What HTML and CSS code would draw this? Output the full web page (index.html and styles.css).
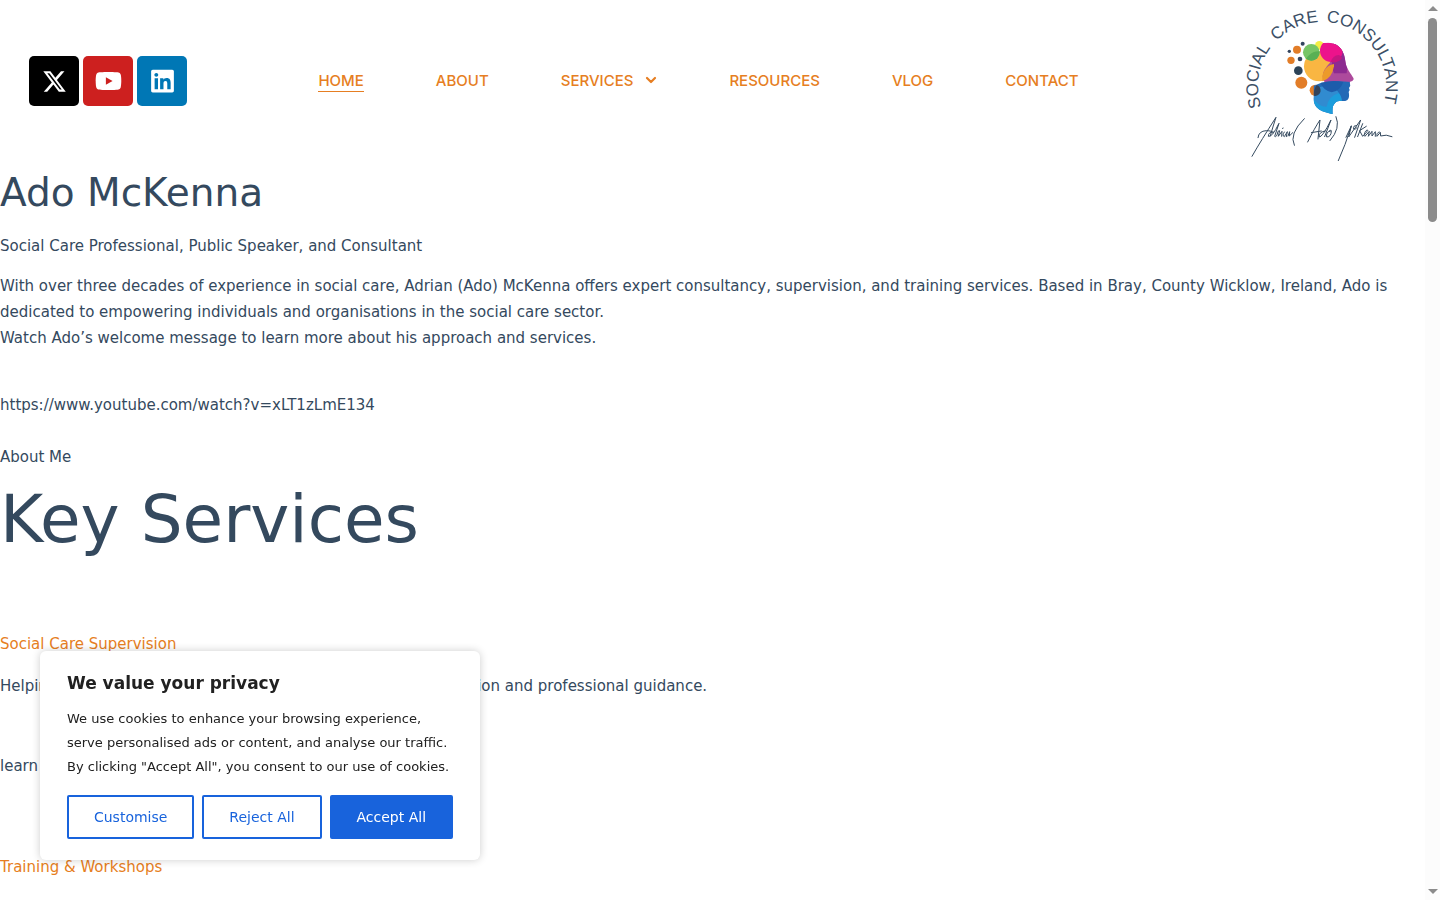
FILE: index.html
```html
<!DOCTYPE html>
<html lang="en">
<head>
<meta charset="utf-8">
<meta name="viewport" content="width=device-width, initial-scale=1">
<title>Ado McKenna – Social Care Consultant</title>
<link rel="stylesheet" href="styles.css">
</head>
<body>
<div class="page">
  <header class="header">
    <div class="social">
      <a class="social-link social-x" href="#" aria-label="X"><svg viewBox="0 0 512 512" width="25" height="25" fill="currentColor"><path d="M389.200 48h70.600L305.600 224.200 487 464H345L233.700 318.600 106.500 464H35.800l164.900-188.500L26.800 48h145.600l100.500 132.900zm-24.800 373.800h39.100L151.100 88h-42z"/></svg></a>
      <a class="social-link social-youtube" href="#" aria-label="YouTube"><svg viewBox="0 0 576 512" width="27" height="24" fill="currentColor"><path d="M549.655 124.083c-6.281-23.650-24.787-42.276-48.284-48.597C458.781 64 288 64 288 64S117.220 64 74.629 75.486c-23.497 6.322-42.003 24.947-48.284 48.597-11.412 42.867-11.412 132.305-11.412 132.305s0 89.438 11.412 132.305c6.281 23.650 24.787 41.500 48.284 47.821C117.220 448 288 448 288 448s170.780 0 213.371-11.486c23.497-6.321 42.003-24.171 48.284-47.821 11.412-42.867 11.412-132.305 11.412-132.305s0-89.438-11.412-132.305zM232.145 337.591V175.185l142.739 81.205z"/></svg></a>
      <a class="social-link social-linkedin" href="#" aria-label="LinkedIn"><svg viewBox="0 0 448 512" width="23" height="26" fill="currentColor"><path d="M416 32H31.900C14.300 32 0 46.500 0 64.300v383.400C0 465.500 14.300 480 31.900 480H416c17.600 0 32-14.500 32-32.300V64.300c0-17.800-14.400-32.300-32-32.300zM135.400 416H69V202.200h66.500V416zm-33.200-243c-21.300 0-38.500-17.300-38.500-38.500S80.900 96 102.200 96c21.200 0 38.500 17.300 38.500 38.500 0 21.300-17.200 38.500-38.500 38.500zm282.100 243h-66.400V312c0-24.800-.5-56.700-34.500-56.700-34.600 0-39.900 27-39.900 54.900V416h-66.400V202.200h63.700v29.200h.9c8.900-16.800 30.600-34.500 62.900-34.500 67.200 0 79.700 44.300 79.700 101.900V416z"/></svg></a>
    </div>
    <nav class="nav" aria-label="Main">
      <a class="nav-link nav-current" href="#">HOME</a>
      <a class="nav-link" href="#">ABOUT</a>
      <a class="nav-link" href="#">SERVICES<svg class="chevron" viewBox="0 0 12 12" width="12" height="12"><path d="M2 4l4 4 4-4" fill="none" stroke="currentColor" stroke-width="2.200" stroke-linecap="round" stroke-linejoin="round"/></svg></a>
      <a class="nav-link" href="#">RESOURCES</a>
      <a class="nav-link" href="#">VLOG</a>
      <a class="nav-link" href="#">CONTACT</a>
    </nav>
    <a class="logo" href="#" aria-label="Social Care Consultant Adrian (Ado) McKenna">
      <svg viewBox="0 -2 160 162" width="160" height="162">
        <defs>
          <path id="ring" d="M80 148A64 64 0 0 1 80 20A64 64 0 0 1 80 148"/>
          <clipPath id="head"><path d="M72 42C100 20 168 6 187 45C198 65 194 82 202 96C210 112 219 122 221 128C222 134 214 136 209 138L211 149L207 156L209 162L206 168C210 185 204 195 193 195C180 195 172 194 166 200C157 208 157 220 158 234C130 228 101 220 101 188L101 140C80 130 60 80 72 42Z"/></clipPath>
          <clipPath id="amber"><circle cx="117" cy="91" r="45"/></clipPath>
        </defs>
        <g class="logo-text">
          <text><textPath href="#ring" startOffset="79">SOCIAL</textPath></text>
          <text><textPath href="#ring" startOffset="150">CARE</textPath></text>
          <text><textPath href="#ring" startOffset="205">CONSULTANT</textPath></text>
        </g>
        <g transform="translate(38 34) scale(.3333)">
          <circle cx="118" cy="28" r="13" fill="#f4ee45"/>
          <circle cx="68" cy="23" r="6" fill="#33455f"/>
          <circle cx="51" cy="41" r="12" fill="#e27d28"/>
          <circle cx="28" cy="46" r="5" fill="#33455f"/>
          <circle cx="33" cy="73" r="11" fill="#e27d28"/>
          <circle cx="60" cy="69" r="7" fill="#33455f"/>
          <circle cx="55" cy="104" r="13" fill="#2c4358"/>
          <circle cx="64" cy="140" r="18" fill="#e27d28"/>
          <circle cx="106" cy="163" r="17" fill="#e27d28"/>
          <circle cx="117" cy="91" r="45" fill="#f9b642"/>
          <g clip-path="url(#head)">
            <path d="M140 15H230V142H136Q115 115 150 80Z" fill="#ad4a9c"/>
            <path d="M160 15H210L200 112H162Q150 90 160 60Z" fill="#8d2b91"/>
            <circle cx="154" cy="44" r="34" fill="#ec138b"/>
            <path d="M152 78Q158 58 176 57Q188 62 185 68Q169 83 152 78Z" fill="#c51680"/>
            <path d="M162 84Q124 92 127 136Q156 128 162 91Z" fill="#ec9a2b"/>
            <path d="M124 140Q166 132 212 138V240H100V150Z" fill="#2369b6"/>
            <circle cx="143" cy="198" r="43" fill="#1c9ddc"/>
            <path d="M101 190Q102 150 140 150Q168 154 176 172Q146 180 140 212Q120 214 101 190Z" fill="#318bd0"/>
            <path d="M122 141Q155 131 190 138Q180 166 155 169Q130 164 122 141Z" fill="#1d5cab"/>
          </g>
          <circle cx="94" cy="49" r="25" fill="#77c566"/>
          <circle cx="94" cy="49" r="25" fill="#58b054" clip-path="url(#amber)"/>
          <path d="M110 147a17 17 0 0 1 3 31q-7 4-11 1q-2-18 8-32Z" fill="#34435a"/>
        </g>
        <g class="signature" transform="translate(-6 -2) scale(.3333)">
          <path d="M48 469Q76 420 120 352Q112 376 103 407M66 413Q68 393 91 392Q108 392 112 398M112 396Q97 396 97 409Q108 413 129 370L116 409Q122 414 126 394L131 392L127 409L138 394L137 409M140 386L141 384M145 396Q137 407 145 410L154 395L151 410M156 408L161 395L160 408L170 398"/>
          <path d="M205 356Q158 402 175 436M215 426Q237 382 252 360L246 417M226 398L256 393M268 393Q249 395 249 411Q259 413 285 360L266 410M283 391Q269 398 272 411Q286 411 286 392L280 394M300 350Q315 384 282 422"/>
          <path d="M307 482Q328 436 346 378L330 412M346 378L338 411L374 360L356 412M362 377Q350 376 353 387Q357 390 363 383M380 371L365 410M391 379L371 392L380 409L390 398Q399 390 393 390Q383 396 387 409L400 394L397 409L408 394L408 408L418 395L418 409M430 396Q421 398 423 409L433 397L434 408Q450 402 468 410"/>
        </g>
      </svg>
    </a>
  </header>
  <main class="content">
    <h1 class="title">Ado McKenna</h1>
    <p class="tagline">Social Care Professional, Public Speaker, and Consultant</p>
    <p class="intro">With over three decades of experience in social care, Adrian (Ado) McKenna offers expert consultancy, supervision, and training services. Based in Bray, County Wicklow, Ireland, Ado is dedicated to empowering individuals and organisations in the social care sector.<br>Watch Ado’s welcome message to learn more about his approach and services.</p>
    <p class="video">https://www.youtube.com/watch?v=xLT1zLmE134</p>
    <p class="about">About Me</p>
    <h2 class="section-title">Key Services</h2>
    <section class="service">
      <h3 class="service-title"><a href="#">Social Care Supervision</a></h3>
      <p class="service-text">Helping social care professionals grow through regular supervision and professional guidance.</p>
      <p class="service-more">learn</p>
    </section>
    <section class="service">
      <h3 class="service-title"><a href="#">Training &amp; Workshops</a></h3>
    </section>
  </main>
</div>
<div class="scrollbar" aria-hidden="true">
  <span class="arrow arrow-up"></span>
  <span class="thumb"></span>
  <span class="arrow arrow-down"></span>
</div>
<section class="consent" aria-labelledby="consent-title">
  <h2 class="consent-title" id="consent-title">We value your privacy</h2>
  <p class="consent-text">We use cookies to enhance your browsing experience, serve personalised ads or content, and analyse our traffic. By clicking "Accept All", you consent to our use of cookies.</p>
  <div class="consent-actions">
    <button class="button" type="button">Customise</button>
    <button class="button" type="button">Reject All</button>
    <button class="button button-primary" type="button">Accept All</button>
  </div>
</section>
</body>
</html>
```
FILE: styles.css
```css
* { box-sizing: border-box; }
body {
  margin: 0;
  padding-right: 15px;
  background: #fff;
  color: #34495e;
  font: 15px/26px "DejaVu Sans", sans-serif;
}
h1, h2, h3, p { margin: 0; font-weight: 400; }
a { color: #e67e22; text-decoration: none; }

.header {
  display: grid;
  grid-template-columns: 1fr auto 1fr;
  align-items: center;
  padding: 0 23px 0 29px;
}
.social { display: flex; gap: 4px; }
.social-link {
  display: flex;
  align-items: center;
  justify-content: center;
  width: 50px;
  height: 50px;
  border-radius: 5px;
  color: #fff;
}
.social-x { background: #000; }
.social-youtube { background: #cd201f; }
.social-linkedin { background: #0077b5; }
.nav { display: flex; gap: 72px; padding-right: 34px; }
.nav-link {
  font: 500 15px/20px Inter, sans-serif;
  color: #e67e22;
  border-bottom: 1px solid transparent;
}
.nav-current { border-bottom-color: #e67e22; }
.chevron { margin-left: 12px; }
.logo { justify-self: end; display: flex; }
.logo-text { font: 17px "Liberation Sans", sans-serif; fill: #3b4f66; }
.signature {
  fill: none;
  stroke: #34495e;
  stroke-width: 3;
  stroke-linejoin: round;
  stroke-linecap: round;
}

.title { margin: 7px 0 16px; font-size: 39px; line-height: 48px; }
.intro { margin-top: 14px; }
.video { margin-top: 41px; }
.about { margin-top: 26px; }
.section-title { margin: 8px 0 69px; font-size: 66px; line-height: 84px; }
.service { margin-bottom: 75px; }
.service-title { font-size: 15px; }
.service-text { margin-top: 16px; }
.service-more { margin-top: 54px; }
.service:last-child { margin-bottom: 20px; }

.consent {
  position: fixed;
  left: 40px;
  bottom: 40px;
  width: 440px;
  padding: 20px 27px 21px;
  border-radius: 6px;
  background: #fff;
  box-shadow: 0 0 8px #0003;
  color: #212121;
}
.consent-title { font-size: 17px; line-height: 24px; font-weight: 700; }
.consent-text { margin: 12px 0 16px; font-size: 13px; line-height: 24px; }
.consent-actions { display: flex; gap: 8px; }
.button {
  flex: auto;
  height: 44px;
  padding: 0;
  border: 2px solid #1863dc;
  border-radius: 2px;
  background: #fff;
  color: #1863dc;
  font: 14px/24px "DejaVu Sans", sans-serif;
}
.button-primary { background: #1863dc; color: #fff; }

.scrollbar {
  position: fixed;
  top: 0;
  right: 0;
  bottom: 0;
  width: 15px;
  display: flex;
  flex-direction: column;
  align-items: center;
  padding: 6px 0;
  background: #fcfcfc;
}
.arrow { border: 5px solid transparent; }
.arrow-up { border-top: 0; border-bottom-color: #8b8b8b; }
.arrow-down { margin-top: auto; border-bottom: 0; border-top-color: #8b8b8b; }
.thumb { width: 9px; height: 204px; margin-top: 7px; border-radius: 5px; background: #8b8b8b; }
```
